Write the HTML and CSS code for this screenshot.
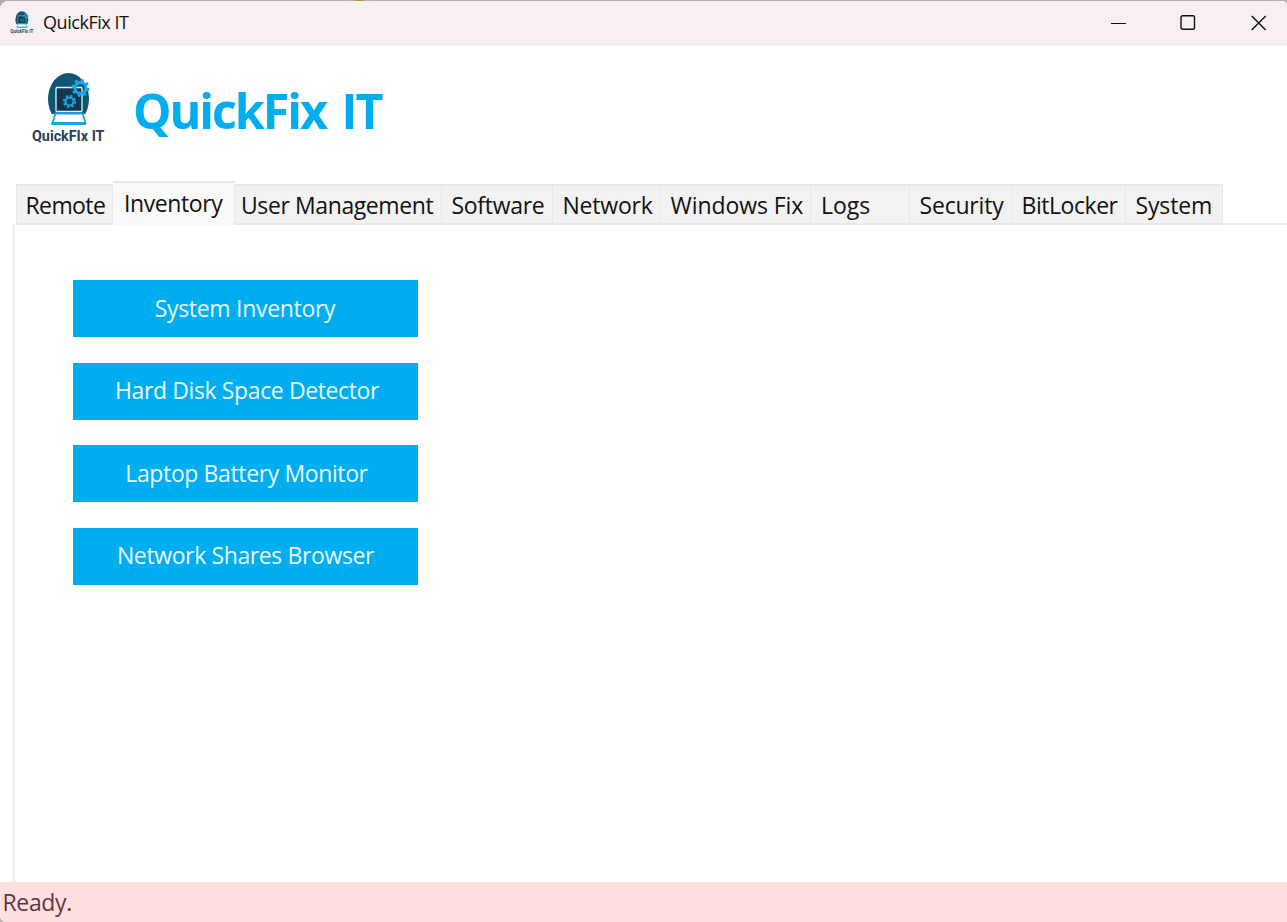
FILE: index.html
```html
<!DOCTYPE html>
<html lang="en">
<head>
<meta charset="utf-8">
<title>QuickFix IT</title>
<link rel="stylesheet" href="styles.css">
</head>
<body>
<svg class="defs" width="0" height="0" aria-hidden="true">
  <symbol id="logo" viewBox="0 0 76 76">
    <ellipse cx="37.500" cy="27" rx="20.500" ry="26" fill="#105673"/>
    <path d="M21 42H54L57 55H18Z" fill="#fff"/>
    <rect x="25" y="15.500" width="26" height="24" rx="1" fill="#10384f" stroke="#e6f3f8" stroke-width="1.300"/>
    <path d="M24.500 41.500H51.500L54.500 51H21.500Z" fill="#fff" stroke="#13a6e3" stroke-width="1.800"/>
    <path d="M20.500 51.500H55" stroke="#13a6e3" stroke-width="3"/>
    <g fill="none" stroke="#18a7e2">
      <circle cx="49.500" cy="16" r="5.500" stroke-width="3"/>
      <circle cx="49.500" cy="16" r="7.800" stroke-width="2.400" stroke-dasharray="3 3.126"/>
      <circle cx="38.500" cy="29.500" r="4" stroke-width="2"/>
      <circle cx="38.500" cy="29.500" r="5.700" stroke-width="2" stroke-dasharray="2.200 2.277"/>
    </g>
    <text class="logo-text" x="1" y="69" textLength="72.500" lengthAdjust="spacingAndGlyphs">QuickFIx IT</text>
  </symbol>
</svg>
<div class="window">
  <header class="titlebar">
    <svg class="app-icon"><use href="#logo"/></svg>
    <span class="caption">QuickFix IT</span>
    <div class="controls">
      <svg viewBox="0 0 16 16"><path d="M0 8.500H15" stroke="#111"/></svg>
      <svg viewBox="0 0 16 16"><rect x="0" y="0.700" width="13.500" height="13.500" rx="1.500" fill="none" stroke="#111" stroke-width="1.400"/></svg>
      <svg viewBox="0 0 16 16"><path d="M.7 1L14.700 15M14.700 1L.7 15" stroke="#111" stroke-width="1.400"/></svg>
    </div>
  </header>
  <div class="brand">
    <svg class="brand-logo"><use href="#logo"/></svg>
    <h1>QuickFix IT</h1>
  </div>
  <nav class="tabs">
    <div class="tab remote"><span>Remote</span></div>
    <div class="tab inventory active"><span>Inventory</span></div>
    <div class="tab users"><span>User Management</span></div>
    <div class="tab software"><span>Software</span></div>
    <div class="tab network"><span>Network</span></div>
    <div class="tab winfix"><span>Windows Fix</span></div>
    <div class="tab logs"><span>Logs</span></div>
    <div class="tab security"><span>Security</span></div>
    <div class="tab bitlocker"><span>BitLocker</span></div>
    <div class="tab system"><span>System</span></div>
  </nav>
  <main class="panel">
    <button class="b1">System Inventory</button>
    <button class="b2">Hard Disk Space Detector</button>
    <button class="b3">Laptop Battery Monitor</button>
    <button class="b4">Network Shares Browser</button>
  </main>
  <footer class="status">Ready.</footer>
</div>
</body>
</html>
```
FILE: styles.css
```css
* { box-sizing: border-box; }
body { margin: 0; background: linear-gradient(90deg, transparent 355px, #b8902f 355px 364px, transparent 364px) 0 0 / 100% 1px no-repeat #b3afb0; font-family: "Open Sans", "Noto Sans", sans-serif; }
.defs { display: block; height: 0; overflow: visible; }
symbol { overflow: visible; }
.window { width: 1287px; height: 922px; display: flex; flex-direction: column; background: #fff; background-clip: padding-box; border-top: 1px solid transparent; border-radius: 9px 5px 0 6px; overflow: hidden; }
.titlebar { height: 45px; flex: none; display: flex; align-items: center; background: #f8eff0; padding: 0 0 2px 10px; }
.app-icon { width: 24px; height: 24px; overflow: visible; }
.caption { margin-left: 9px; font-size: 18px; line-height: 24px; color: #111; letter-spacing: -0.45px; padding-bottom: 1px; }
.controls { display: flex; gap: 54px; margin-left: auto; padding-right: 20px; }
.controls svg { width: 16px; height: 16px; display: block; overflow: visible; }
.brand { height: 135px; flex: none; display: flex; padding: 26px 0 0 31px; }
.brand-logo { width: 76px; height: 76px; flex: none; overflow: visible; }
.logo-text { font: bold 15px Roboto, "Liberation Sans", sans-serif; fill: #293f55; }
h1 { margin: 5px 0 0 26px; font-size: 48.5px; line-height: 66px; font-weight: 700; color: #00adef; letter-spacing: -2.1px; word-spacing: 5px; white-space: nowrap; }
.tabs { height: 44px; flex: none; display: flex; align-items: flex-end; padding-left: 16px; }
.tab { height: 41px; flex: none; background: #f2f2f2; border: solid #e8e8e8; border-width: 2px 1px 2px 0; padding: 3px 0 0 9px; font-size: 23px; line-height: 32px; white-space: nowrap; color: #111; }
.tab:first-child { border-left-width: 1px; }
.active { height: 44px; background: #f9f9f9; border-bottom: 0; padding-top: 3.5px; }
.remote { width: 97px; padding-left: 8.5px; letter-spacing: -0.6px; }
.inventory { width: 122px; padding-left: 11px; letter-spacing: -0.4px; }
.users { width: 207px; padding-left: 6px; letter-spacing: -0.4px; }
.software { width: 111px; padding-left: 9.5px; letter-spacing: -0.3px; }
.network { width: 108px; padding-left: 9.5px; letter-spacing: -0.2px; }
.winfix { width: 150px; padding-left: 9.5px; letter-spacing: -0.08px; }
.logs { width: 99px; padding-left: 10px; }
.security { width: 102px; padding-left: 9.5px; letter-spacing: -0.2px; }
.bitlocker { width: 114px; padding-left: 9.5px; letter-spacing: -0.45px; }
.system { width: 97px; padding-left: 9.5px; letter-spacing: -0.15px; }
.tabs::after { content: ""; flex: 1; height: 2px; background: #ebebeb; }
.panel { flex: 1; margin-left: 13px; border-left: 2px solid #ededed; padding: 55px 0 0 58px; display: flex; flex-direction: column; gap: 25.5px; }
button { width: 345px; height: 57px; flex: none; padding: 0 0 2px; border: 0; background: #00adef; color: #e9f7fd; font: 23px/32px "Open Sans", "Noto Sans", sans-serif; letter-spacing: -0.38px; }
.b1 { letter-spacing: -0.3px; padding-right: 1px; }
.b2 { padding-left: 3px; }
.b3 { padding-left: 2px; }
.status { height: 40px; flex: none; background: #fee0e1; color: #61363f; padding: 4px 2.5px; font-size: 23px; line-height: 32px; letter-spacing: -0.35px; }
```
